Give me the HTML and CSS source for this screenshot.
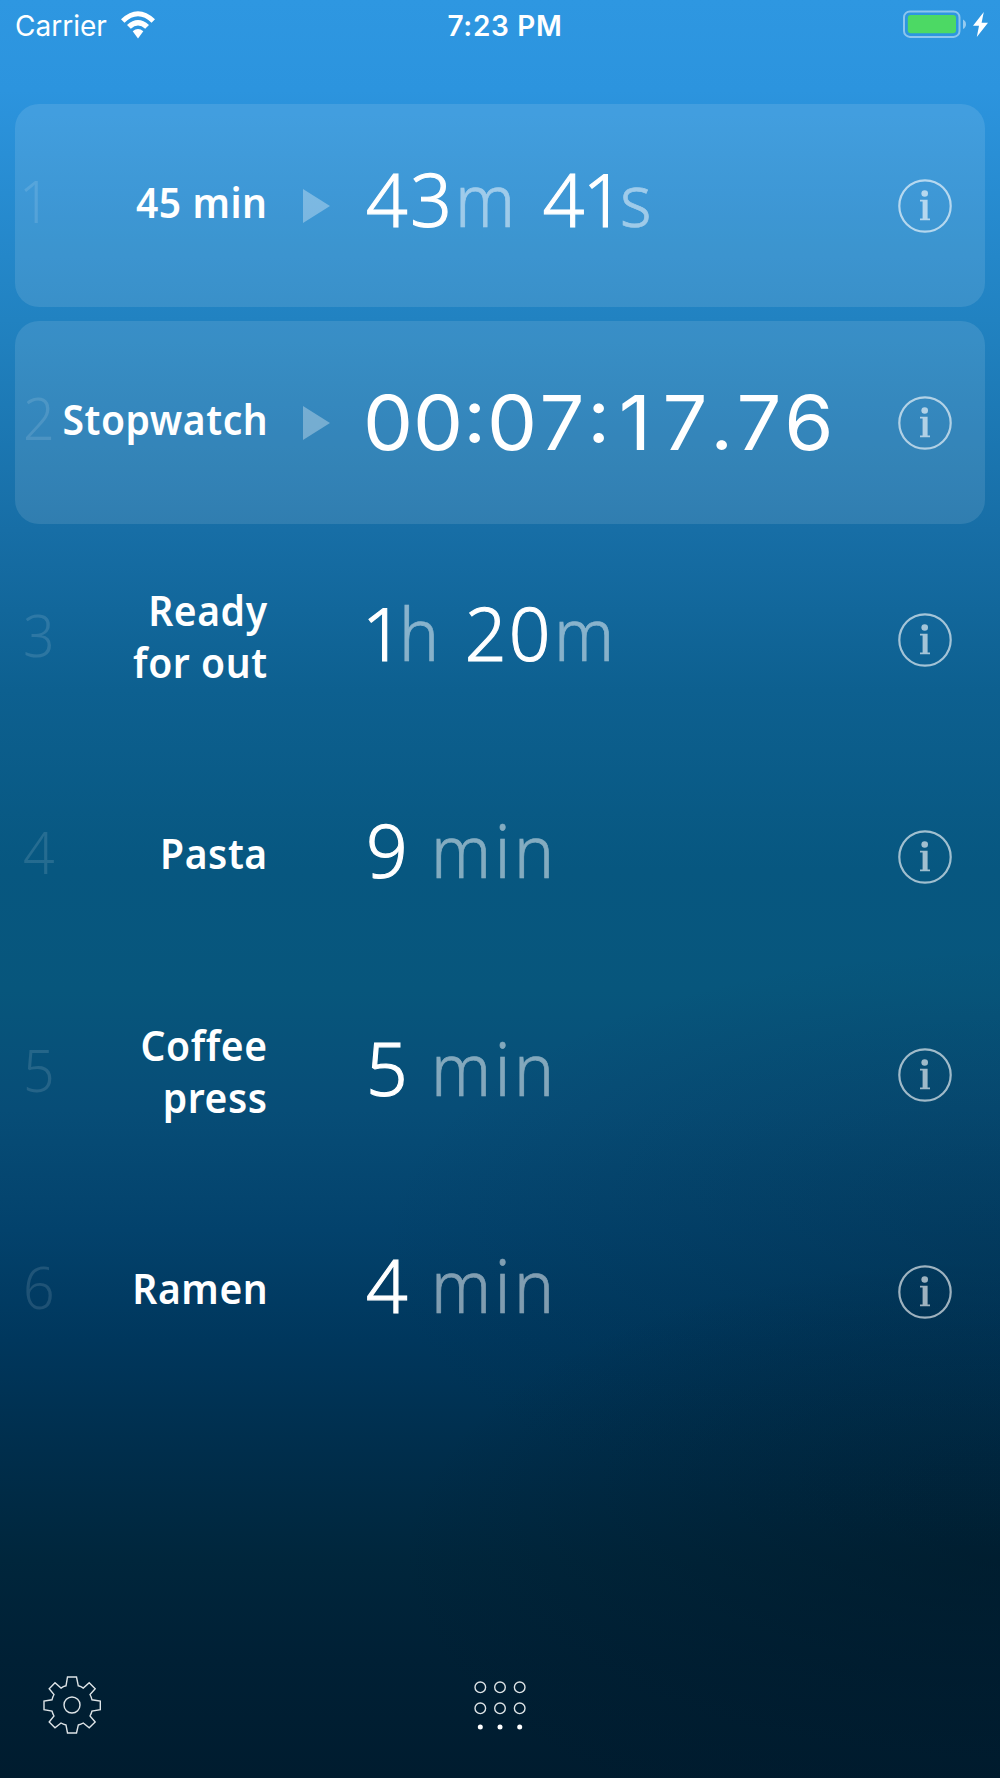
FILE: index.html
```html
<!DOCTYPE html>
<html lang="en">
<head>
    <meta charset="UTF-8">
    <meta name="viewport" content="width=device-width, initial-scale=1.0">
    <title>Timers</title>
    <link rel="stylesheet" href="styles.css">
</head>
<body>

<!-- Shared info icon -->
<svg class="defs" width="0" height="0">
    <symbol id="info" viewBox="0 0 54 54">
        <circle cx="27" cy="27" r="25.7" fill="none" stroke="currentColor" stroke-width="2.2"/>
        <circle cx="26.7" cy="14.5" r="3.3" fill="currentColor"/>
        <path d="M22 20.8h7.6v18.8h2.4v1.7H22v-1.7h2.6V22.5H22z" fill="currentColor"/>
    </symbol>
</svg>

<header class="status-bar">
    <div class="carrier">
        <span>Carrier</span>
        <svg class="wifi" width="34" height="28" viewBox="0 0 34 28">
            <path d="M0 8.2Q17 -7.8 34 8.2L30.5 11.7Q17 -1.2 3.5 11.7Z"/>
            <path d="M6 14Q17 3.8 28 14L24.2 17.8Q17 11.2 9.8 17.8Z"/>
            <path d="M11.7 20.2Q17 16 22.3 20.2L17 27.6Z"/>
        </svg>
    </div>
    <div class="clock">7:23 PM</div>
    <div class="power">
        <svg width="88" height="30" viewBox="0 0 88 30">
            <rect x="1" y="1.4" width="55.5" height="25.5" rx="6" fill="none" stroke="#fff" stroke-opacity=".45" stroke-width="2"/>
            <rect x="4.8" y="5" width="48.2" height="18.3" rx="3" fill="#4cd964"/>
            <path d="M60 9.4Q63 11 63 14.2T60 19Z" fill="#fff" fill-opacity=".5"/>
            <path d="M80.8 2L70 15.8H76L73.8 27L85 12.8H78.6Z" fill="#fff"/>
        </svg>
    </div>
</header>

<main class="timers">
    <div class="timer active">
        <span class="index first">1</span>
        <span class="name">45 min</span>
        <svg class="play" width="27" height="34" viewBox="0 0 27 34"><path d="M0 0L27 17L0 34Z"/></svg>
        <div class="time"><b>43</b><i>m</i> <b>4<span class="one">1</span></b><i>s</i></div>
        <svg class="info"><use href="#info"/></svg>
    </div>

    <div class="timer active">
        <span class="index">2</span>
        <span class="name">Stopwatch</span>
        <svg class="play" width="27" height="34" viewBox="0 0 27 34"><path d="M0 0L27 17L0 34Z"/></svg>
        <div class="time digital">
            <span>0</span><span>0</span><span class="sep">:</span><span>0</span><span>7</span><span class="sep">:</span><span>1</span><span>7</span><span class="sep">.</span><span>7</span><span>6</span>
        </div>
        <svg class="info"><use href="#info"/></svg>
    </div>

    <div class="timer">
        <span class="index">3</span>
        <span class="name">Ready<br>for out</span>
        <div class="time"><b><span class="one">1</span></b><i>h</i> <b>20</b><i>m</i></div>
        <svg class="info"><use href="#info"/></svg>
    </div>

    <div class="timer">
        <span class="index">4</span>
        <span class="name">Pasta</span>
        <div class="time"><b>9</b> <i>min</i></div>
        <svg class="info"><use href="#info"/></svg>
    </div>

    <div class="timer">
        <span class="index">5</span>
        <span class="name">Coffee<br>press</span>
        <div class="time"><b>5</b> <i>min</i></div>
        <svg class="info"><use href="#info"/></svg>
    </div>

    <div class="timer">
        <span class="index">6</span>
        <span class="name">Ramen</span>
        <div class="time"><b>4</b> <i>min</i></div>
        <svg class="info"><use href="#info"/></svg>
    </div>
</main>

<footer class="toolbar">
    <svg class="gear" width="60" height="60" viewBox="-30 -30 60 60">
        <path d="M-4.5 -28H4.5L6.3 -19.2Q9 -18.6 11.3 -16.9L17.2 -22.3L23.2 -16.3L18 -10.5Q19.3 -8.2 20 -5.2L28.3 -4V4.6L20 6Q19.3 8.8 18 11L23.2 17L17.2 22.8L11.3 18Q9 19.3 6.3 20L4.5 28H-4.5L-6 20Q-8.8 19.3 -11 18L-17 22.8L-22.8 17L-18 11Q-19.3 8.8 -20 6L-28 4.6V-4L-20 -5.2Q-19.3 -8.2 -18 -10.5L-22.8 -16.3L-17 -22.3L-11 -16.9Q-8.8 -18.6 -6 -19.2Z"/>
        <circle cx="0" cy="0" r="8"/>
    </svg>
    <svg class="dots" width="52" height="50" viewBox="0 0 52 50">
        <circle cx="6.3" cy="6.3" r="5.3"/>
        <circle cx="26" cy="6.3" r="5.3"/>
        <circle cx="45.7" cy="6.3" r="5.3"/>
        <circle cx="6.3" cy="27.3" r="5.3"/>
        <circle cx="26" cy="27.3" r="5.3"/>
        <circle cx="45.7" cy="27.3" r="5.3"/>
        <circle class="dot" cx="6.3" cy="46" r="2.5"/>
        <circle class="dot" cx="26" cy="46" r="2.5"/>
        <circle class="dot" cx="45.7" cy="46" r="2.5"/>
    </svg>
</footer>

</body>
</html>
```
FILE: styles.css
```css
* {
    box-sizing: border-box;
}

body {
    margin: 0;
    height: 1778px;
    overflow: hidden;
    display: flex;
    flex-direction: column;
    color: #fff;
    font-family: "Noto Sans", sans-serif;
    background:
        radial-gradient(ellipse 620px 300px at 100% 1250px, rgba(2, 40, 62, 0.3), rgba(2, 40, 62, 0)),
        radial-gradient(ellipse 600px 300px at 100% 1560px, rgba(0, 22, 36, 0.5), rgba(0, 22, 36, 0)),
        linear-gradient(to bottom, #2e97e1 0, #2c94de 90px, #2182c1 320px, #176ea6 530px, #0d6090 690px, #075780 870px, #07567c 990px, #074d77 1110px, #03426c 1230px, #00375d 1340px, #002e4c 1450px, #00263c 1560px, #002035 1660px, #001c2f 1778px);
}

.defs {
    position: absolute;
}

/* Status bar */
.status-bar {
    height: 104px;
    flex: none;
    display: grid;
    grid-template-columns: 1fr auto 1fr;
    align-items: start;
    padding: 10px 9px 0 15px;
    font-family: Inter, sans-serif;
    font-size: 28px;
    line-height: 32px;
}

.carrier {
    display: flex;
    gap: 14px;
}

.wifi {
    margin-top: 1px;
    fill: #fff;
}

.clock {
    font-weight: 600;
    letter-spacing: 0.7px;
    padding-left: 4px;
}

.power {
    text-align: right;
    line-height: 0;
}

/* Timer rows */
.timers {
    flex: none;
    display: grid;
    gap: 14.3px;
    padding: 0 15px;
}

.timer {
    height: 203px;
    display: grid;
    grid-template-columns: 8px 245px 35px 27px 35px 1fr 54px;
    align-items: center;
    padding-right: 33px;
    border-radius: 24px;
}

.active {
    background: rgba(255, 255, 255, 0.11);
}

.index {
    grid-column: 2;
    grid-row: 1;
    justify-self: start;
    font-size: 59px;
    line-height: 60px;
    font-weight: 300;
    color: rgba(255, 255, 255, 0.12);
    padding-bottom: 12px;
    transform: scaleX(0.94);
    transform-origin: left;
}

.first {
    margin-left: -4px;
}

.name {
    grid-column: 1 / 3;
    grid-row: 1;
    justify-self: end;
    text-align: right;
    font-size: 42px;
    line-height: 52px;
    font-weight: 600;
    letter-spacing: 0.6px;
    padding-bottom: 8px;
    transform: scaleX(0.93);
    transform-origin: right;
}

.play {
    grid-column: 4;
    grid-row: 1;
    fill: rgba(255, 255, 255, 0.32);
}

.time {
    grid-column: 6;
    grid-row: 1;
    font-size: 73px;
    line-height: 80px;
    padding-bottom: 14px;
    margin-left: 1px;
    word-spacing: 1px;
    white-space: nowrap;
}

.time b {
    font-weight: 300;
    letter-spacing: 2.5px;
    -webkit-text-stroke: 1.1px #fff;
}

.time i {
    display: inline-block;
    margin-left: 1px;
    margin-right: -2px;
    font-style: normal;
    font-weight: 300;
    letter-spacing: 4px;
    opacity: 0.5;
    -webkit-text-stroke: 0.7px #fff;
    transform: scaleX(0.92);
    transform-origin: left;
}

/* The figure 1 sits in a narrower cell than the others */
.one {
    margin: 0 -8px 0 -4px;
}

.digital {
    display: flex;
    margin-left: -2px;
    font-family: Inter, sans-serif;
    font-size: 75px;
    font-feature-settings: "case";
    padding-bottom: 0;
}

.digital span {
    width: 50px;
    text-align: center;
    transform: scaleX(1.06);
}

.digital .sep {
    width: 23.5px;
}

.info {
    grid-column: 7;
    grid-row: 1;
    width: 54px;
    height: 54px;
    color: rgba(255, 255, 255, 0.62);
}

/* Bottom toolbar */
.toolbar {
    display: grid;
    grid-template-columns: 1fr auto 1fr;
    align-items: start;
    margin-top: auto;
    height: 103px;
    padding: 0 42px;
    fill: none;
    stroke: #dde3e6;
    stroke-width: 1.4;
}

.dots {
    margin-top: 6px;
}

.dot {
    fill: #fff;
    stroke: none;
}
```
